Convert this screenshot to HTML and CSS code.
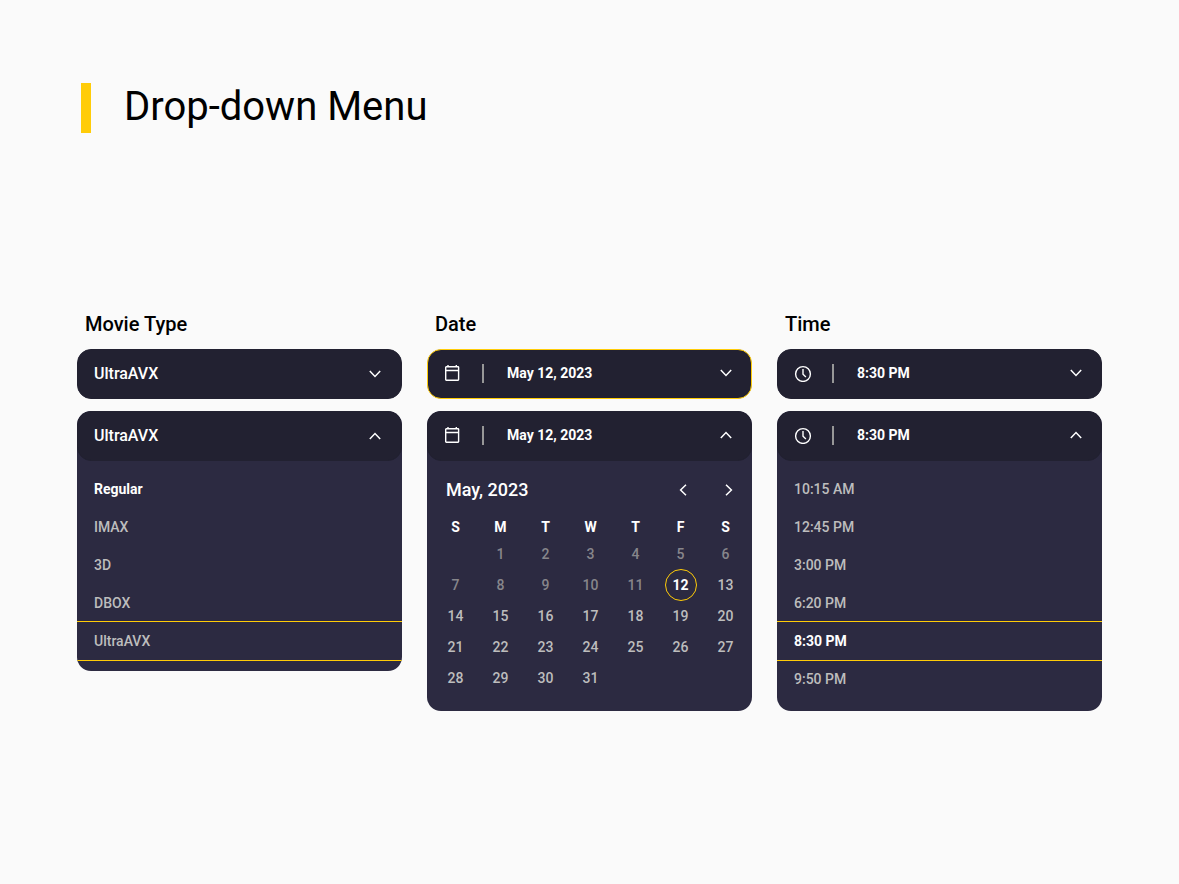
FILE: index.html
```html
<!DOCTYPE html>
<html lang="en">
<head>
<meta charset="utf-8">
<meta name="viewport" content="width=device-width, initial-scale=1">
<title>Drop-down Menu</title>
<link rel="stylesheet" href="styles.css">
</head>
<body>
<svg class="sprite" aria-hidden="true">
  <symbol id="down" viewBox="0 0 12 8"><path d="M0.8 1 6 6.4 11.200 1"/></symbol>
  <symbol id="up" viewBox="0 0 12 8"><path d="M0.8 7 6 1.600 11.200 7"/></symbol>
  <symbol id="left" viewBox="0 0 8 12"><path d="M7 0.8 1.600 6 7 11.200"/></symbol>
  <symbol id="right" viewBox="0 0 8 12"><path d="M1 0.8 6.400 6 1 11.200"/></symbol>
  <symbol id="calendar" viewBox="0 0 18 18"><rect x="1.700" y="2.700" width="12.900" height="13.500" rx="0.6"/><path d="M1.700 6.500h12.900M4 1v2M12.300 1v2"/></symbol>
  <symbol id="clock" viewBox="0 0 18 18"><circle cx="9" cy="10" r="7.400"/><path d="M9 5V10.200l2.900 2.700"/></symbol>
</svg>
<header class="title">
  <h1>Drop-down Menu</h1>
</header>
<main class="columns">
  <section class="column">
    <h2 id="type-label">Movie Type</h2>
    <button class="select select-text" type="button" aria-labelledby="type-label type-value" aria-expanded="false">
      <span id="type-value">UltraAVX</span><svg class="chevron"><use href="#down"/></svg>
    </button>
    <div class="panel">
      <button class="select select-text" type="button" aria-label="Movie Type, UltraAVX" aria-expanded="true">
        <span>UltraAVX</span><svg class="chevron"><use href="#up"/></svg>
      </button>
      <ul class="options">
        <li><button class="option selected" type="button">Regular</button></li>
        <li><button class="option" type="button">IMAX</button></li>
        <li><button class="option" type="button">3D</button></li>
        <li><button class="option" type="button">DBOX</button></li>
        <li><button class="option ruled" type="button">UltraAVX</button></li>
      </ul>
    </div>
  </section>

  <section class="column">
    <h2 id="date-label">Date</h2>
    <button class="select focused" type="button" aria-labelledby="date-label date-value" aria-expanded="false">
      <svg class="icon"><use href="#calendar"/></svg><span class="value" id="date-value">May 12, 2023</span><svg class="chevron"><use href="#down"/></svg>
    </button>
    <div class="panel">
      <button class="select" type="button" aria-label="Date, May 12, 2023" aria-expanded="true">
        <svg class="icon"><use href="#calendar"/></svg><span class="value">May 12, 2023</span><svg class="chevron"><use href="#up"/></svg>
      </button>
      <div class="month">
        <h3>May, 2023</h3>
        <button class="arrow" type="button" aria-label="Previous month"><svg><use href="#left"/></svg></button>
        <button class="arrow" type="button" aria-label="Next month"><svg><use href="#right"/></svg></button>
      </div>
      <div class="calendar">
        <table>
          <thead>
            <tr><th>S</th><th>M</th><th>T</th><th>W</th><th>T</th><th>F</th><th>S</th></tr>
          </thead>
          <tbody>
            <tr class="past"><td></td><td><button type="button">1</button></td><td><button type="button">2</button></td><td><button type="button">3</button></td><td><button type="button">4</button></td><td><button type="button">5</button></td><td><button type="button">6</button></td></tr>
            <tr><td class="past"><button type="button">7</button></td><td class="past"><button type="button">8</button></td><td class="past"><button type="button">9</button></td><td class="past"><button type="button">10</button></td><td class="past"><button type="button">11</button></td><td class="today"><button type="button">12</button></td><td><button type="button">13</button></td></tr>
            <tr><td><button type="button">14</button></td><td><button type="button">15</button></td><td><button type="button">16</button></td><td><button type="button">17</button></td><td><button type="button">18</button></td><td><button type="button">19</button></td><td><button type="button">20</button></td></tr>
            <tr><td><button type="button">21</button></td><td><button type="button">22</button></td><td><button type="button">23</button></td><td><button type="button">24</button></td><td><button type="button">25</button></td><td><button type="button">26</button></td><td><button type="button">27</button></td></tr>
            <tr><td><button type="button">28</button></td><td><button type="button">29</button></td><td><button type="button">30</button></td><td><button type="button">31</button></td><td></td><td></td><td></td></tr>
          </tbody>
        </table>
      </div>
    </div>
  </section>

  <section class="column">
    <h2 id="time-label">Time</h2>
    <button class="select" type="button" aria-labelledby="time-label time-value" aria-expanded="false">
      <svg class="icon"><use href="#clock"/></svg><span class="value" id="time-value">8:30 PM</span><svg class="chevron"><use href="#down"/></svg>
    </button>
    <div class="panel">
      <button class="select" type="button" aria-label="Time, 8:30 PM" aria-expanded="true">
        <svg class="icon"><use href="#clock"/></svg><span class="value">8:30 PM</span><svg class="chevron"><use href="#up"/></svg>
      </button>
      <ul class="options options-time">
        <li><button class="option" type="button">10:15 AM</button></li>
        <li><button class="option" type="button">12:45 PM</button></li>
        <li><button class="option" type="button">3:00 PM</button></li>
        <li><button class="option" type="button">6:20 PM</button></li>
        <li><button class="option selected ruled" type="button">8:30 PM</button></li>
        <li><button class="option" type="button">9:50 PM</button></li>
      </ul>
    </div>
  </section>
</main>
</body>
</html>
```

FILE: styles.css
```css
:root {
  --page: #fafafa;
  --bar: #222131;
  --panel: #2c2a41;
  --accent: #ffcc08;
  --muted: #bdbdbd;
  --past: #87868b;
}

*, *::after { box-sizing: border-box; }

body {
  margin: 0;
  padding: 83px 77px 48px;
  background: var(--page);
  color: #000;
  font-family: Roboto, "Liberation Sans", sans-serif;
}

h1, h2, h3, ul { margin: 0; padding: 0; }

button {
  padding: 0;
  border: 0;
  background: none;
  color: inherit;
  font: inherit;
  cursor: pointer;
}

svg {
  display: block;
  fill: none;
  stroke: #fff;
  stroke-width: 1.5;
}

.sprite { position: absolute; width: 0; height: 0; }

.title {
  margin: 0 4px 179px;
  padding-left: 33px;
  border-left: 10px solid var(--accent);
}

.title h1 {
  font-size: 40px;
  font-weight: 400;
  line-height: 48px;
  padding-bottom: 2px;
}

.columns {
  display: grid;
  grid-template-columns: repeat(auto-fit, minmax(300px, 1fr));
  gap: 25px;
  align-items: start;
}

.column {
  display: flex;
  flex-direction: column;
  gap: 12px;
}

.column h2 {
  padding-left: 8px;
  font-size: 20px;
  font-weight: 500;
  line-height: 25px;
}

.select {
  display: flex;
  align-items: center;
  width: 100%;
  height: 50px;
  padding: 0 19px 2px 16px;
  border: 1px solid var(--bar);
  border-radius: 14px;
  background: var(--bar);
  color: #fff;
  font-size: 14px;
  font-weight: 700;
  text-align: left;
}

.select-text {
  padding: 0 20px 0 16px;
  font-size: 16px;
  font-weight: 500;
}

.select-text span { padding-bottom: 2px; }

.focused { border-color: var(--accent); }

.icon { width: 18px; height: 18px; stroke-width: 1.4; }

.value {
  margin-left: 20px;
  padding-left: 23px;
  border-left: 2px solid #979797;
  line-height: 19px;
}

.chevron { width: 12px; height: 8px; margin-left: auto; }

.panel {
  overflow: hidden;
  border-radius: 14px;
  background: var(--panel);
}

.options {
  padding: 9px 0 11px;
  list-style: none;
}

.options-time { padding-bottom: 13px; }

.option {
  display: block;
  width: 100%;
  height: 38px;
  padding-left: 17px;
  color: var(--muted);
  font-size: 14px;
  font-weight: 500;
  text-align: left;
}

.selected { color: #fff; font-weight: 700; }

.ruled { box-shadow: 0 -1px var(--accent), 0 1px var(--accent); }

.month {
  display: flex;
  align-items: center;
  gap: 22px;
  padding: 17px 11px 13px 19px;
  color: #fff;
}

.month h3 {
  flex: 1;
  font-size: 18px;
  font-weight: 500;
  line-height: 24px;
}

.arrow {
  display: grid;
  place-items: center;
  width: 24px;
  height: 24px;
}

.arrow svg { width: 8px; height: 12px; }

.calendar { padding: 0 4px 18px 6px; }

table {
  width: 100%;
  table-layout: fixed;
  border-collapse: collapse;
  color: var(--muted);
  font-size: 14px;
  font-weight: 500;
  text-align: center;
}

th {
  height: 23px;
  padding: 0;
  color: #fff;
  font-weight: 700;
}

td { height: 31px; padding: 0; }

td button { width: 31px; height: 31px; display: block; margin: auto; }

.past { color: var(--past); }

.today button {
  position: relative;
  color: #fff;
  font-weight: 700;
}

.today button::after {
  content: "";
  position: absolute;
  top: 0;
  left: 0;
  width: 32px;
  height: 32px;
  border: 1px solid var(--accent);
  border-radius: 50%;
}
```
